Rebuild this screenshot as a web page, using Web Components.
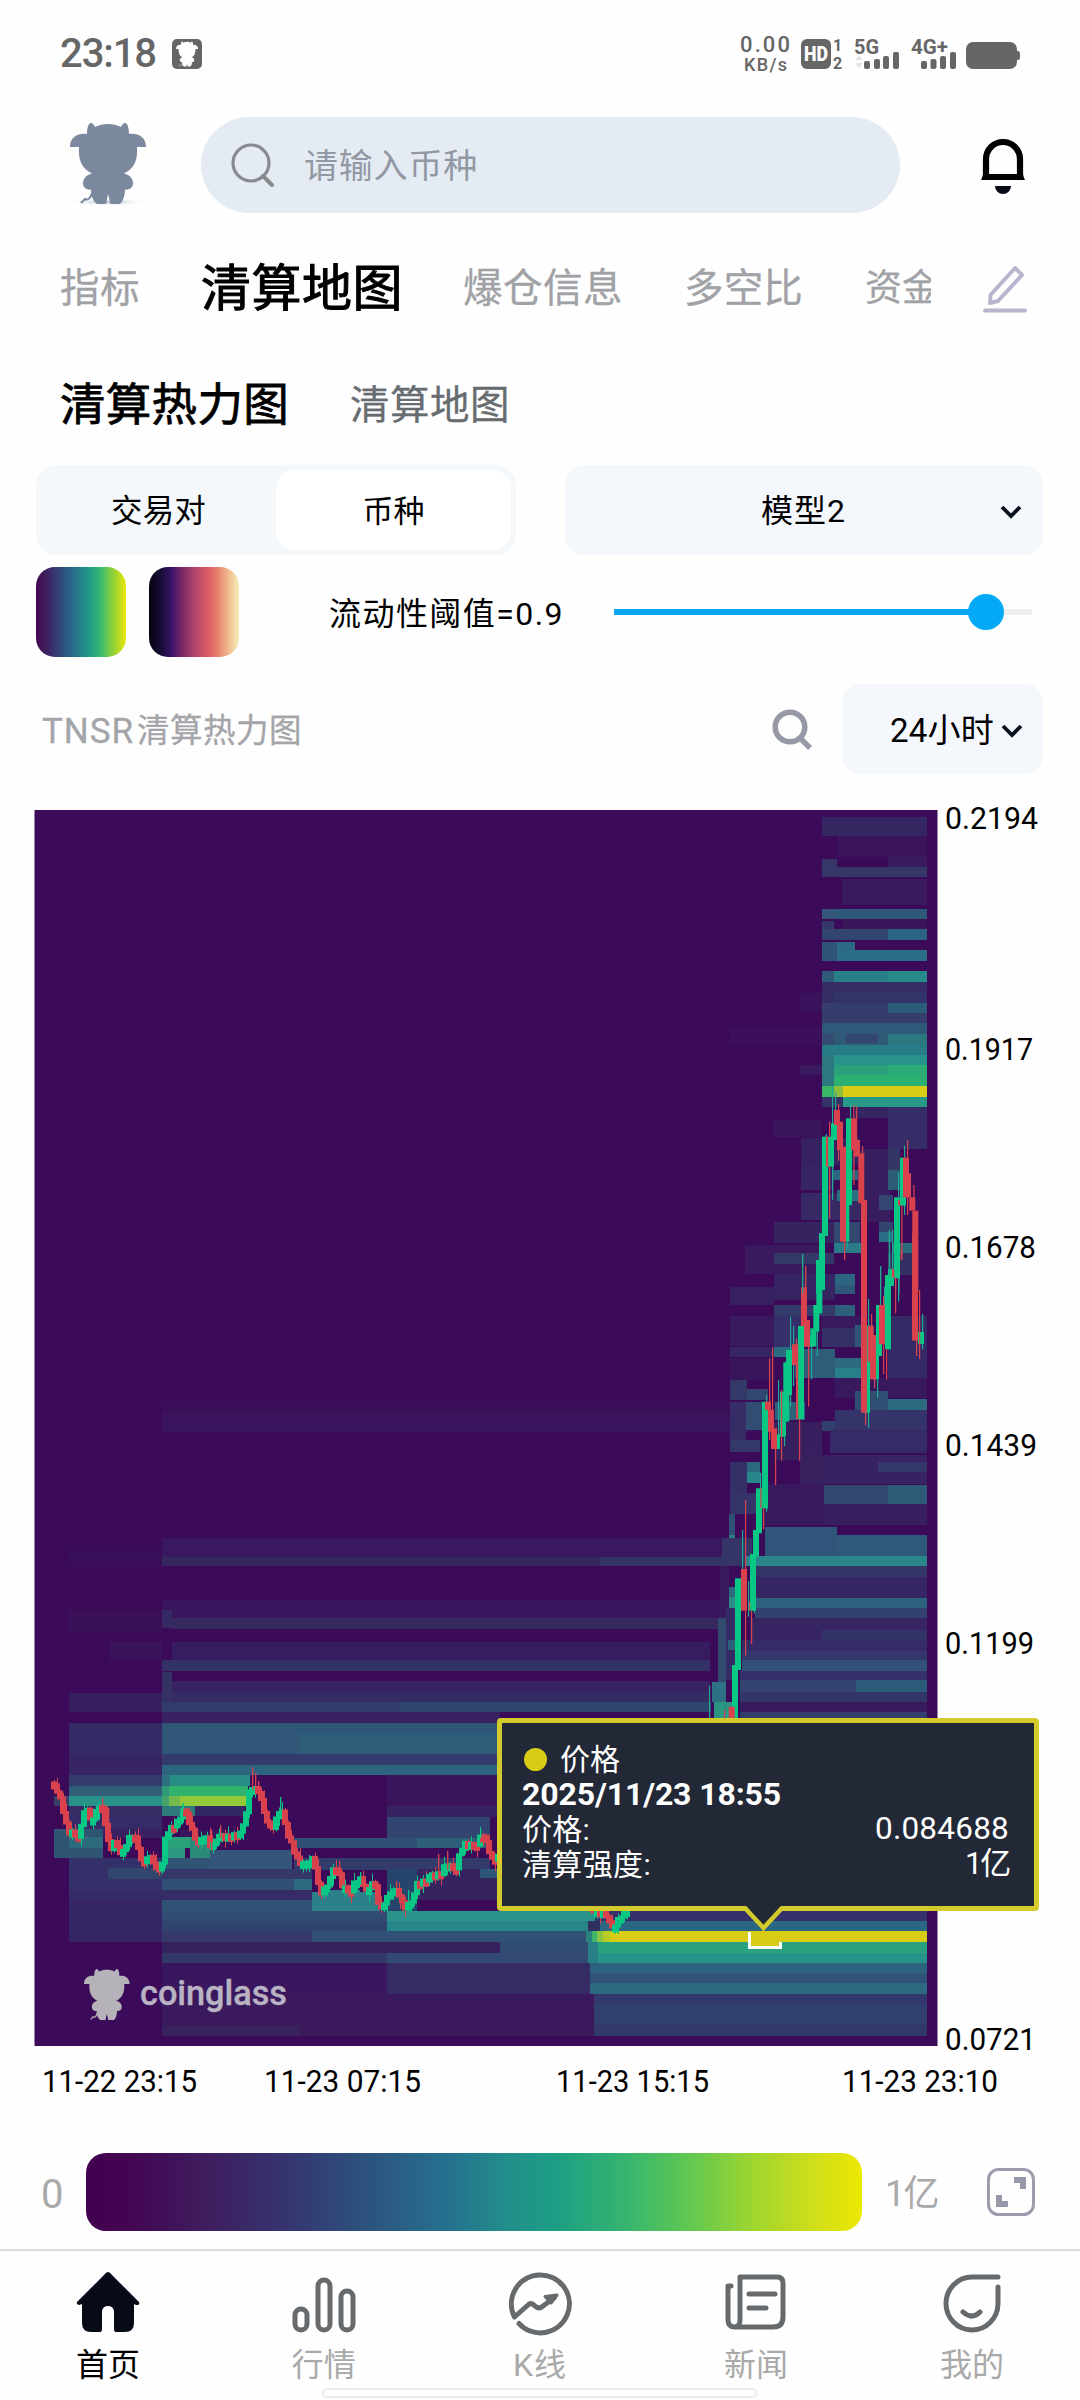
<!DOCTYPE html>
<html lang="zh-CN">
<head>
<meta charset="utf-8">
<title>清算热力图</title>
<style>
html,body{margin:0;background:#fefefe}
body{width:1080px;height:2400px;overflow:hidden;font-family:Roboto,"Noto Sans CJK SC",sans-serif;color:#000}
</style>
</head>
<body>
<liq-app></liq-app>
<script>
const define=(name,html,setup)=>customElements.define(name,class extends HTMLElement{
  connectedCallback(){
    if(this.shadowRoot)return;
    const root=this.attachShadow({mode:'open'});
    const t=document.createElement('template');
    t.innerHTML=html;
    root.append(t.content.cloneNode(true));
    if(setup)setup.call(this,root);
  }
});

const BULL='<path d="M0 24C0 14 8 10 17 11C17 6 18 1 20.500 0C23 0 24 2 25 4C33 0 43 0 51 4C52 2 53 0 55.500 0C58 1 59 6 59 11C68 10 76 14 76 24H67C68 37 64 46 54 50.500C60 52 63 56 63 60C63 65 59 67 55 66.500C55 73 53 78 50 81H40.500L38 71L36 81H27C23 78 21 73 21 66.500C17 67 13 65 13 60C13 56 16 52 22 50.500C12 46 8 37 9 24Z"/><path d="M22 70C20 77 17 77 15 76L11 80" fill="none" stroke="currentColor" stroke-width="2"/>';

/* Text label whose tracking is tuned so the run fills the width given in w */
define('fit-text','<style>:host{display:block;flex:none;white-space:nowrap;line-height:1.3;padding-top:var(--drop,0)}</style><span><slot></slot></span>',function(root){
  const w=+this.getAttribute('w'),s=root.querySelector('span');
  this.style.width=w+'px';
  this.style.fontSize=this.getAttribute('size')+'px';
  const n=this.textContent.length;
  s.style.letterSpacing=(w-s.getBoundingClientRect().width)/n+'px';
});

define('status-bar',`<style>
:host{display:flex;height:108px;align-items:center;padding-left:60px;color:#666;box-sizing:border-box}
fit-text{font-weight:500}.app{margin-left:16px}.sys{margin-left:528px}
</style>
<fit-text w="96" size="40">23:18</fit-text>
<svg class="app" width="30" height="30" viewBox="0 0 30 30" color="#fff"><rect width="30" height="30" rx="5" fill="#666"/><g fill="#fff" transform="translate(4 2.500) scale(.29 .31)">${BULL}</g></svg>
<svg class="sys" width="300" height="108" viewBox="730 0 300 108" fill="#666" font-family="Roboto" font-weight="500">
<text x="740" y="52" font-size="22" textLength="50">0.00</text><text x="744" y="71" font-size="18" textLength="43">KB/s</text>
<rect x="801" y="39" width="30" height="30" rx="6"/><text x="804" y="61" font-size="20" font-weight="900" fill="#fff" textLength="24" lengthAdjust="spacingAndGlyphs">HD</text>
<text x="833" y="51" font-size="16" font-weight="700">1</text><text x="833" y="69" font-size="16" font-weight="700">2</text>
<text x="854" y="54" font-size="20" font-weight="700" textLength="25" lengthAdjust="spacingAndGlyphs">5G</text>
<path d="M855 60l4-5 4 5zM855 63l4 5 4-5z" fill="#e4e4e4"/>
<rect x="864" y="61" width="6" height="8" rx="2"/><rect x="874" y="59" width="6" height="10" rx="2"/><rect x="883" y="56" width="6" height="13" rx="2"/><rect x="893" y="52" width="6" height="17" rx="2"/>
<text x="911" y="54" font-size="20" font-weight="700" textLength="37" lengthAdjust="spacingAndGlyphs">4G+</text>
<rect x="921" y="61" width="6" height="8" rx="2"/><rect x="930.500" y="59" width="6" height="10" rx="2"/><rect x="940" y="56" width="6" height="13" rx="2"/><rect x="950" y="52" width="6" height="17" rx="2"/>
<rect x="966" y="42" width="51" height="27" rx="7"/><rect x="1014" y="51" width="6" height="9" rx="2.500"/>
</svg>`);

define('search-header',`<style>
:host{display:flex;height:114px;align-items:center;padding-left:66px;box-sizing:border-box;--drop:3px}
.bull{margin-top:2px}
.bar{display:flex;align-items:center;width:699px;height:96px;border-radius:48px;background:#e5ebf3;margin-left:51px;box-sizing:border-box;padding-left:30px}
fit-text{color:#9298a4;margin-left:29px}.bell{margin-left:80px;margin-top:3px}
</style>
<svg class="bull" width="84" height="86" viewBox="-4 0 84 86" color="#7b899e"><defs><radialGradient id="s"><stop stop-color="#aab6c6"/><stop offset="1" stop-color="#fff" stop-opacity="0"/></radialGradient></defs><ellipse cx="38" cy="79" rx="40" ry="4" fill="url(#s)"/><g fill="#7b899e">${BULL}</g></svg>
<div class="bar"><svg width="44" height="44" viewBox="0 0 44 44" fill="none" stroke="#888b8e" stroke-width="3.200"><circle cx="20" cy="20" r="18"/><path d="M32 33L41 42" stroke-width="4" stroke-linecap="round"/></svg><fit-text w="174" size="34">请输入币种</fit-text></div>
<svg class="bell" width="46" height="58" viewBox="0 0 46 58"><path d="M6 37V21a17 17 0 0 1 34 0v16" fill="none" stroke="#000" stroke-width="6.200"/><path d="M3 36H43C43.500 39 44.500 41 45 42H1C1.500 41 2.500 39 3 36Z"/><path d="M15 48H31A8 8 0 0 1 15 48Z" fill="#080c18"/></svg>`);

define('main-tabs',`<style>
:host{display:flex;height:130px;align-items:center;padding-left:60px;color:#a0a2a6;box-sizing:border-box;--drop:4px;-webkit-text-stroke:.3px}
.on{color:#000;-webkit-text-stroke:1px}.clip{overflow:hidden;width:66px;margin-left:62px}
</style>
<fit-text w="80" size="39.500">指标</fit-text><fit-text class="on" style="margin-left:61px" w="202" size="50">清算地图</fit-text><fit-text style="margin-left:60px" w="160" size="39.500">爆仓信息</fit-text><fit-text style="margin-left:61px" w="119" size="39.500">多空比</fit-text>
<div class="clip"><fit-text w="74" size="37">资金</fit-text></div>
<svg style="margin:4px 0 0 50px" width="48" height="50" viewBox="0 0 48 50" fill="none" stroke="#b8b5cf"><path d="M34 4L41 11L17 37L9 39L9.500 31Z" stroke-width="4" stroke-linejoin="round"/><path d="M4 46.500H44" stroke-width="4" stroke-linecap="round"/></svg>`);

define('sub-tabs',`<style>:host{display:flex;height:103px;align-items:center;padding-left:60px;color:#676c70;box-sizing:border-box;--drop:4px;-webkit-text-stroke:.3px}.on{color:#000;-webkit-text-stroke:.8px}</style>
<fit-text class="on" w="229" size="45.500">清算热力图</fit-text><fit-text style="margin-left:61px" w="160" size="39.500">清算地图</fit-text>`);

const CHEV='<svg width="24" height="18" viewBox="0 0 24 18" fill="none" stroke="#0b1220" stroke-width="3.800"><path d="M3 4L12 13L21 4"/></svg>';
define('filter-row',`<style>
:host{display:flex;height:110px;align-items:center;padding-left:36px;gap:49px;box-sizing:border-box;--drop:4px}
.seg{display:flex;width:480px;height:90px;border-radius:20px;background:#f4f8fb;padding:5px;box-sizing:border-box}
.seg div{display:flex;flex:1;align-items:center;justify-content:center}.seg .on{background:#fff;border-radius:18px}
.sel{display:flex;align-items:center;width:478px;height:90px;border-radius:18px;background:#f4f7fb;box-sizing:border-box;padding-left:196px}
.sel svg{margin:3px 0 0 153px}
</style>
<div class="seg"><div><fit-text w="95" size="31.500">交易对</fit-text></div><div class="on"><fit-text w="62" size="31">币种</fit-text></div></div>
<div class="sel"><fit-text w="85" size="32">模型2</fit-text>${CHEV}</div>`);

define('threshold-row',`<style>
:host{display:flex;height:94px;align-items:center;padding-left:36px;box-sizing:border-box;--drop:5px}
.sw{width:90px;height:90px;border-radius:19px;margin-right:23px}
.a{background:linear-gradient(90deg,#43044f,#3c2a68 16%,#2c5580 32%,#27758c 45%,#1f9e84 60%,#3aba70 72%,#8bd03a 85%,#ece60c)}
.b{background:linear-gradient(90deg,#06020f,#170c35 13%,#3a1268 25%,#812a68 38%,#b6476d 52%,#dc5c66 66%,#e8836f 77%,#f0ba90 88%,#f6efb5)}
fit-text{margin-left:67px}
.track{display:flex;align-items:center;width:418px;height:36px;margin-left:50px}
.fill{height:6px;width:356px;background:#08a8f0}.knob{width:36px;height:36px;border-radius:50%;background:#03a9f4;margin-left:-2px}.rest{height:6px;flex:1;background:#eee}
</style>
<div class="sw a"></div><div class="sw b"></div><fit-text w="235" size="32">流动性阈值=0.9</fit-text>
<div class="track"><div class="fill"></div><div class="knob"></div><div class="rest"></div></div>`);

define('title-row',`<style>
:host{display:flex;height:139px;align-items:center;padding-left:42px;color:#a4a5a9;box-sizing:border-box;--drop:6px}
.t{display:flex;width:729px;align-items:center;-webkit-text-stroke:.3px}
.sel{display:flex;align-items:center;width:201px;height:90px;border-radius:18px;background:#f4f7fb;color:#000;box-sizing:border-box;padding-left:48px;margin-left:28px}
.sel svg{margin:5px 0 0 6px}
</style>
<div class="t"><fit-text w="92" size="35">TNSR</fit-text><fit-text style="margin-left:3px" w="165" size="32.500">清算热力图</fit-text></div>
<svg width="43" height="42" viewBox="0 0 43 42" fill="none" stroke="#9799a8" stroke-width="5.500"><circle cx="19" cy="19" r="14.800"/><path d="M29 30L39 40"/></svg>
<div class="sel"><fit-text w="104" size="33">24小时</fit-text>${CHEV}</div>`);

/* Heat cells: x0, x1, y0, y1, colour */
const HEAT=`
162 755 1400 1412 3b0e5a|162 755 1412 1421 3a135b|162 755 1421 1432 3a145e
69 162 1550 1566 3a0f5a|162 730 1538 1558 391860|162 720 1557 1566 352861
69 162 1610 1632 3a1059|162 720 1600 1618 39165d|162 172 1610 1628 352a64|172 730 1618 1629 35295f
110 162 1642 1660 3a135b|172 710 1642 1660 371c5f|162 710 1660 1671 333266
162 172 1672 1702 363165|172 710 1681 1692 372362|172 710 1692 1702 352c66|69 162 1693 1712 37205f|162 711 1702 1712 323c6c|400 711 1702 1712 2f476f
162 500 1712 1723 382261
69 162 1723 1754 352a66|162 500 1723 1754 2f5676|300 500 1733 1754 2e5d79|69 162 1754 1775 372463|162 500 1754 1765 343a6b|162 500 1765 1775 2d6580
69 162 1775 1786 323b6c|162 170 1775 1786 2d7180|170 250 1775 1786 288c87|387 500 1775 1806 3a155b|387 500 1806 1817 362361
69 162 1786 1796 2e5e78|162 169 1786 1796 2d9a78|169 248 1786 1796 31b26d
54 69 1796 1806 374064|69 162 1796 1806 28918a|162 169 1796 1806 43a56b|169 180 1796 1806 73b94e|180 246 1796 1806 93c83a
69 162 1806 1816 352b65|162 195 1806 1816 2e787b|195 245 1806 1816 332864
69 162 1816 1829 352c67|180 245 1830 1838 3a175d|54 103 1829 1858 305574|69 103 1837 1848 2d6a7e|103 162 1829 1838 382061|162 190 1837 1848 2ba179|190 210 1837 1858 2b8b7b|162 185 1848 1858 2d967e
210 292 1850 1869 325579|162 210 1858 1869 315475|69 162 1858 1890 34306a|108 162 1868 1879 31466d|162 312 1869 1879 353769|162 294 1879 1890 305075|294 312 1879 1890 2b6a81
69 312 1890 1900 352b66|69 162 1900 1942 362666|162 312 1900 1911 305275|162 387 1911 1921 314b73|162 387 1921 1932 30436f|312 380 1892 1911 2b8089|321 360 1890 1902 2b8089
294 490 1838 1848 305075|294 490 1858 1870 323b6c|387 490 1817 1838 324571|417 490 1838 1848 2d5f79|417 497 1869 1900 35245f|480 497 1869 1878 2d5678
387 417 1869 1911 27446d|387 610 1911 1921 28928b|387 600 1921 1931 27868a|312 595 1931 1942 315076|162 312 1931 1942 343969
162 595 1942 1953 372260|500 595 1942 1953 314b73|162 595 1953 1963 343868|387 595 1953 1963 324a73|162 387 1963 1994 38175e|387 595 1963 1994 352b65|162 595 1994 2036 3a195d|162 300 2026 2036 39235e
595 927 1911 1921 35326b|598 927 1921 1931 2b6682|588 600 1921 1931 2f2f60
586 592 1931 1942 28837e|592 597 1931 1942 41b46b|597 603 1931 1942 87c43f|603 610 1931 1942 b8ca24|610 927 1931 1942 d8cc17
588 598 1942 1963 287f88|598 927 1942 1953 28a27f|598 927 1953 1963 28938a|590 927 1963 1973 2c647f|590 927 1973 1983 30537a|590 927 1983 1994 2c6980|594 927 1994 2004 33396f|594 927 2004 2036 31406f
594 927 2024 2036 323968
822 927 817 836 352862|838 927 836 857 3b145b|822 837 859 877 343767|837 927 867 877 343768|888 927 857 867 391b5f|842 927 879 905 391a5d
822 834 909 919 34547a|834 927 909 919 2d5878|822 834 921 930 343767|843 927 919 929 3b155a|822 927 929 940 32456f|888 927 929 940 2b6482
822 837 942 961 305477|837 855 942 950 2d6885|837 927 950 961 2b6d87|822 834 971 982 305b7a|834 927 971 982 287f88|888 927 971 982 288b8a
822 927 982 1003 352d65|834 927 993 1003 333469|822 927 1003 1013 343d6b|888 927 1003 1013 2d5c7a|822 927 1013 1023 353d6d|822 927 1023 1034 305979
822 834 1034 1055 344b72|834 927 1034 1045 2e5977|846 878 1034 1043 324671|888 927 1034 1045 2b7881|822 927 1045 1055 287c87|822 834 1055 1086 2d777f|834 927 1055 1065 28938a|834 927 1065 1075 2aa07c|888 927 1065 1075 2bac74|834 927 1075 1086 2bb072
822 834 1086 1097 3ab765|834 843 1086 1097 91bd3c|843 927 1086 1097 d8cc17|822 843 1097 1107 353267|843 927 1097 1107 289887
855 888 1107 1118 372562|888 927 1107 1149 352d67|800 822 993 1012 3a135c|800 822 1065 1075 391a5f|730 822 1027 1045 3b0f59
774 822 1120 1137 3a165c|801 860 1138 1165 382161|801 834 1165 1190 372462|801 860 1193 1220 362964|774 860 1222 1243 382361|834 860 1222 1243 314870
860 890 1149 1222 381d5f|888 900 1149 1170 343766|888 900 1170 1190 2d5c79|833 858 1170 1180 2c657f|837 858 1190 1201 2b7081|858 862 1190 1201 2a7c86
879 893 1195 1210 344571|879 893 1222 1232 31456f|879 893 1232 1242 2a6e85|834 862 1243 1253 297b87|892 912 1243 1253 2b6b7e|888 912 1253 1275 353064
745 822 1245 1274 391a5e|774 834 1253 1264 343867|774 835 1274 1300 372563|835 855 1274 1285 2c6580|835 855 1285 1294 2f577a|730 774 1287 1305 382161|774 835 1305 1316 343a6a|835 855 1305 1316 2c607b
730 774 1316 1346 391a5e|774 805 1316 1347 35306a|822 862 1316 1328 391a5d|822 873 1328 1347 353068|855 873 1325 1347 2f5676|730 774 1347 1357 372663|774 795 1347 1357 2b6b81|795 835 1349 1378 2f5c78|835 862 1358 1368 2d6a80|835 862 1368 1378 28818a|888 927 1316 1378 362a66
730 774 1358 1380 39155c|730 747 1380 1400 343868|747 768 1389 1400 31476f|835 927 1378 1398 39195e|855 888 1391 1410 314f73|888 927 1399 1410 2c6a80
730 746 1402 1440 362c66|746 765 1402 1430 324d72|775 805 1402 1420 2c647b|774 822 1422 1460 382060|822 888 1421 1431 33406c|835 927 1410 1430 34336a|830 927 1430 1453 352b66|730 760 1440 1452 343769
730 747 1462 1493 353068|747 760 1462 1472 2c697f|747 760 1472 1483 28858a|800 927 1455 1484 382362|878 927 1462 1472 343769|800 822 1455 1484 39205f
730 758 1493 1514 35346a|824 890 1485 1504 324870|888 927 1485 1504 2e5b78|760 824 1484 1525 38195d|824 927 1504 1525 381f5f
729 735 1514 1535 305177|729 735 1535 1545 2b807f|729 735 1545 1555 2e5e78|765 837 1527 1556 30557b|837 927 1535 1556 30587a|600 728 1557 1566 343468|722 752 1538 1566 353567|745 927 1556 1566 2a868a
729 735 1587 1597 2b697e|729 735 1597 1608 2b8c87|720 729 1566 1618 391a5f|752 927 1566 1577 343668|752 927 1577 1598 362663|755 927 1598 1608 2d637e|755 927 1608 1618 33416e|750 927 1618 1640 372563|822 927 1630 1640 343367
718 726 1618 1718 314a6e|726 738 1608 1680 362a65|728 735 1640 1650 2d6078|742 927 1640 1651 362b67|742 927 1651 1660 33376b|742 927 1660 1671 31517b|740 927 1671 1680 353069|740 927 1680 1692 344370|856 927 1680 1692 2d5c7a|740 927 1692 1702 343568|740 927 1702 1712 381b5d|740 927 1712 1722 333d6b
712 726 1682 1702 2c7284|714 735 1702 1722 2b9180`.trim().split(/[|\n]/).map(r=>r.split(' '));

/* Price path of the quieter session, walked in three pixel candles */
const PATHS=['53 1783 57 1790 61 1803 65 1820 68 1832 72 1832 76 1836 80 1835 83 1812 86 1808 90 1817 93 1820 97 1807 101 1802 104 1825 107 1820 109 1863 112 1840 116 1845 122 1855 127 1842 131 1833 135 1838 139 1852 143 1864 148 1855 153 1861 158 1871 161 1868 165 1840 169 1829 174 1825 180 1818 183 1808 187 1817 191 1828 195 1837 199 1843 203 1834 208 1840 211 1849 216 1838 223 1834 229 1838 235 1834 240 1833 244 1822 247 1805 250 1787 254 1788 259 1791 263 1810 269 1825 274 1828 278 1810 282 1812 288 1835 293 1850 299 1862 304 1864 310 1859 314 1860 317 1880 320 1893 327 1886 331 1872 337 1868 342 1885 350 1892 355 1882 361 1878 367 1894 373 1878 379 1907 384 1902 390 1893 393 1888 399 1895 404 1908 411 1902 416 1885 425 1880 434 1872 440 1876 446 1862 455 1870 461 1850 466 1842 472 1845 478 1843 482 1833 487 1845 493 1862 500 1850','590 1905 598 1914 605 1912 611 1928 617 1922 623 1913 630 1905'];
/* Tall candles and wicks: x, y0, y1, in thirds of a pixel from the block origin */
const BLOCKS=[
{ox:600,oy:1250,
g:'396 1245 1404,405 985 1260,450 912 1082,459 840 920,468 715 850,486 455 775,522 553 597,540 425 560,550 337 515,558 300 435,594 228 507,622 255 290,631 235 290,640 165 245,649 30 190,657 -50 120,792 228 488,819 318 388,828 165 318,855 75 298,864 57 108,882 -50 83,954 246 282',
r:'423 957 1082,495 455 480,504 480 545,513 535 597,576 283 345,603 112 228,612 210 290,783 -50 488,803 228 335,810 255 388,837 165 283,936 -50 272,386 1370 1404',
wg:'606 12 112,570 200 470,579 228 408,633 290 388,650 245 318,534 390 553,552 560 588,426 840 957,444 993 1100,461 1070 1090,480 668 715,498 435 785,804 147 533,831 388 443,840 48 165,852 110 165,866 -60 57,876 -60 60,894 83 155,966 192 298,327 1307 1404,363 1360 1404,381 1380 1404',
wr:'615 48 112,588 265 507,591 283 507,597 507 632,624 290 470,516 292 480,507 325 570,525 597 705,543 420 632,435 750 957,435 1082 1217,447 1055 1082,453 1082 1182,481 715 775,489 775 838,732 0 30,795 488 525,813 192 228,822 335 415,849 138 165,849 283 372,858 298 388,876 57 83,885 83 190,902 0 30,948 272 318,957 120 327,372 1380 1404'},
{ox:700,oy:790,
g:'348 1410 1510,357 1330 1415,366 1040 1338,384 1040 1130,393 1000 1050,430 1240 1355,438 985 1245,582 1222 1465,600 1103 1247,555 1455 1510',
r:'402 960 1005,411 995 1080,420 1070 1355,453 985 1080,462 1050 1100,475 1090 1240,483 1230 1510,609 1103 1222,615 1150 1222,628 1222 1262,637 1262 1510',
wg:'377 1032 1050,396 890 1230,405 905 960,450 930 985,440 1355 1375,594 1148 1222,612 1067 1103,612 1247 1275,306 1392 1510,540 1428 1510,567 1330 1455,576 1375 1437,595 1465 1510',
wr:'378 1040 1130,381 1040 1130,387 995 1040,387 1130 1285,414 942 1112,460 945 985,468 950 1050,432 1355 1410,460 1080 1185,486 1068 1090,594 1230 1247,597 1230 1247,621 1050 1103,621 1222 1275,604 1247 1410,640 1185 1222,315 1428 1510,576 1437 1462,579 1437 1462,585 1462 1500'}];
const G='#09c784',R='#d9424d';

function candles(){
  let s='';
  const rect=(x,y,w,h,c)=>{s+=`<rect x="${x.toFixed(1)}" y="${y.toFixed(1)}" width="${w}" height="${h.toFixed(1)}" fill="${c}"/>`};
  for(const p of PATHS){
    const k=p.split(' ').map(Number);
    let i=0,prev=k[1],n=0;
    for(let x=k[0]+1;x<k[k.length-2];x+=3){
      while(k[i+2]<x)i+=2;
      const t=(x-k[i])/(k[i+2]-k[i]),j=[0,2,-2,1,-1,2,-1][n%7];
      const y=k[i+1]+(k[i+3]-k[i+1])*t+j;
      const c=y>prev?R:G,a=Math.min(y,prev),b=Math.max(y,prev,a+5);
      rect(x,a-[3,7,2,5,9,3][n%6],1,b-a+[7,12,5,13,11,8][n%6],c);
      rect(x-3,a-1.500,6,b-a+3,c);
      prev=y;n++;
    }
  }
  [[252,1767,1790,R],[255,1773,1790,R],[258,1781,1792,R],[280,1797,1812,G],[108,1808,1830,R],[102,1798,1812,R],[182,1804,1812,G],[211,1830,1850,R],[220,1825,1838,R],[339,1861,1870,R],[360,1872,1885,G],[396,1881,1895,R],[438,1854,1875,R],[447,1851,1870,R],[480,1829,1838,G],[316,1857,1880,R],[400,1892,1909,R],[408,1890,1910,G]].forEach(([x,a,b,c])=>rect(x,a,1.3,b-a,c));
  for(const b of BLOCKS){
    const run=(str,w,c)=>str.split(',').forEach(e=>{const[x,y,z]=e.split(' ').map(Number);rect(b.ox+x/3,b.oy+y/3,w,(z-y)/3,c)});
    run(b.wg,1.2,'#20a990');run(b.g,6,G);run(b.r,6,R);run(b.wr,1.2,R);
  }
  return s;
}

define('liq-chart',`<style>
:host{display:block;position:relative;height:1314px}
svg{display:block}
price-tip{position:absolute;left:497px;top:920px}
</style>
<svg width="1080" height="1314" viewBox="0 798 1080 1314" font-family='Roboto,"Noto Sans CJK SC",sans-serif'>
<rect x="34.500" y="810" width="903" height="1236" fill="#3b0b59"/>
<g id="heat" shape-rendering="crispEdges"></g>
<g id="can"></g>
<g fill="#b5b2b9" color="#b5b2b9"><g transform="translate(84 1969) scale(.6 .63)">${BULL}</g></g>
<text x="140" y="2005" font-size="35" font-weight="500" fill="#b9b3c3" stroke="#b9b3c3" stroke-width=".4" textLength="147" lengthAdjust="spacingAndGlyphs">coinglass</text>
<path d="M749.500 1932V1947.500H780.500V1942" fill="none" stroke="#fff" stroke-width="3"/><rect x="751" y="1940" width="28" height="6" fill="#d8cc17"/>
<g id="ax" font-size="31.500" fill="#000"></g>
</svg>
<price-tip></price-tip>`,function(root){
  root.getElementById('heat').innerHTML=HEAT.map(([a,b,c,d,f])=>`<rect x="${a}" y="${c}" width="${b-a}" height="${d-c}" fill="#${f}"/>`).join('');
  root.getElementById('can').innerHTML=candles();
  root.getElementById('ax').innerHTML=[['0.2194',945,829,93],['0.1917',945,1060,88],['0.1678',945,1258,91],['0.1439',945,1456,92],['0.1199',945,1654,89],['0.0721',945,2050,91],['11-22 23:15',42,2092,155],['11-23 07:15',264,2092,157],['11-23 15:15',556,2092,153],['11-23 23:10',842,2092,156]].map(([t,x,y,w])=>`<text x="${x}" y="${y}" textLength="${w}" lengthAdjust="spacingAndGlyphs">${t}</text>`).join('');
});

define('price-tip',`<style>
:host{display:block;width:542px;height:213px;color:#fff}
.box{width:542px;height:193px;border:5px solid #d3cb2c;border-radius:4px;background:#222836;box-sizing:border-box;padding:19px 25px 0 20px;display:flex;flex-direction:column}
.row{display:flex;flex:none;height:35px;align-items:center;justify-content:space-between}.head{justify-content:flex-start;gap:13px;padding-left:2px}
.dot{width:23px;height:23px;border-radius:50%;background:#d8cc17}
svg{display:block;margin:-5px 0 0 244px}
.b{font-weight:700}
</style>
<div class="box"><div class="row head"><div class="dot"></div><fit-text w="60" size="30">价格</fit-text></div>
<div class="row"><fit-text class="b" w="259" size="32">2025/11/23 18:55</fit-text></div>
<div class="row"><fit-text w="68" size="30">价格:</fit-text><fit-text w="134" size="31.500">0.084688</fit-text></div>
<div class="row"><fit-text w="129" size="30">清算强度:</fit-text><fit-text w="44" size="31">1亿</fit-text></div></div>
<svg width="46" height="26" viewBox="0 0 46 26"><path d="M5 0L23 20L41 0Z" fill="#222836"/><path d="M3 1L22.500 22L42 1" fill="none" stroke="#d3cb2c" stroke-width="4.500"/></svg>`);

define('scale-legend',`<style>
:host{display:flex;height:137px;padding:23px 0 0 41px;align-items:center;color:#a9a9a9;box-sizing:border-box;--drop:5px}
.bar{width:776px;height:78px;border-radius:20px;margin-left:22px;background:linear-gradient(90deg,#43004f,#430653 6%,#3f1c5e 15%,#353570 26%,#2d4f7c 35%,#266f8f 46%,#21908a 55%,#1c9f83 61%,#38b66e 70%,#62c951 78%,#9fd52e 86%,#d0de1a 94%,#ece800)}
</style>
<fit-text w="23" size="40">0</fit-text><div class="bar"></div><fit-text style="margin-left:23px" w="53" size="36">1亿</fit-text>
<svg style="margin-left:49px" width="48" height="48" viewBox="0 0 48 48"><rect x="1.500" y="1.500" width="45" height="45" rx="10" fill="none" stroke="#9b9dae" stroke-width="3"/><path d="M27 9H39V21H33V15H27ZM9 27H15V33H21V39H9Z" fill="#9799a8"/></svg>`);

define('nav-item',`<style>:host{display:flex;flex-direction:column;align-items:center;width:216px;color:#a9a9a9}:host([active]){color:#000}fit-text{margin-top:7px}</style>
<slot></slot>`,function(root){
  const f=document.createElement('fit-text');
  f.setAttribute('w',this.getAttribute('w'));f.setAttribute('size','32');f.textContent=this.getAttribute('label');
  root.append(f);
});

define('bottom-nav',`<style>
:host{display:block;height:151px;border-top:2px solid #dcdcdc;box-sizing:border-box}
.row{display:flex;height:137px;padding:19px 0 0;box-sizing:border-box;width:1080px}
nav-item svg{flex:none}
.grip{width:435px;height:10px;box-sizing:border-box;border:2px solid #ececec;border-radius:5px;margin-left:322px;background:#fff}
</style>
<div class="row">
<nav-item active label="首页" w="64"><svg width="68" height="68" viewBox="0 0 68 68"><path d="M34 2Q36 2 38 5L65 32Q66 34 64 35H62L60 34V53Q60 62 51 62H42Q40 62 40 59V41Q39 36 34 36Q29 36 28 41V59Q28 62 26 62H17Q8 62 8 53V34L5 35Q2 34 3 32L30 5Q32 2 34 2Z" fill="#060b17"/></svg></nav-item>
<nav-item label="行情" w="65"><svg width="68" height="68" viewBox="0 0 68 68" fill="none" stroke="#666a6c" stroke-width="5"><rect x="5" y="39" width="12" height="21" rx="6"/><rect x="28" y="10" width="12" height="50" rx="6"/><rect x="51" y="21" width="12" height="39" rx="6"/></svg></nav-item>
<nav-item label="K线" w="54"><svg width="68" height="68" viewBox="0 0 68 68" fill="none" stroke="#666a6c" stroke-width="5" stroke-linecap="round" stroke-linejoin="round"><path d="M8.500 47A29 29 0 1 1 13 53.500M8.500 47L22 35Q25 32 29 36Q33 40 37 36L48 28"/><path d="M39 26.500L51 25L45 33Z" fill="#666a6c" stroke-width="3"/></svg></nav-item>
<nav-item label="新闻" w="64"><svg width="68" height="68" viewBox="0 0 68 68" fill="none" stroke="#666a6c" stroke-width="5" stroke-linecap="round" stroke-linejoin="round"><path d="M18 7H55Q61 7 61 13V47Q61 57 51 57H13Q6 57 6 50V16H9M18 7V50Q18 57 12 57M27 24H53M27 38H44"/></svg></nav-item>
<nav-item label="我的" w="64"><svg width="68" height="68" viewBox="0 0 68 68" fill="none" stroke="#666a6c" stroke-width="5" stroke-linecap="round"><path d="M60 7H34A26 26.500 0 1 0 60 34V17M25 42Q34 50 42 42"/></svg></nav-item>
</div><div class="grip"></div>`);

define('liq-app',`<style>:host{display:flex;flex-direction:column;width:1080px;height:2400px;overflow:hidden}:host>*{flex:none}</style>
<status-bar></status-bar><search-header></search-header><main-tabs></main-tabs><sub-tabs></sub-tabs><filter-row></filter-row><threshold-row></threshold-row><title-row></title-row><liq-chart></liq-chart><scale-legend></scale-legend><bottom-nav></bottom-nav>`);
</script>
</body>
</html>
